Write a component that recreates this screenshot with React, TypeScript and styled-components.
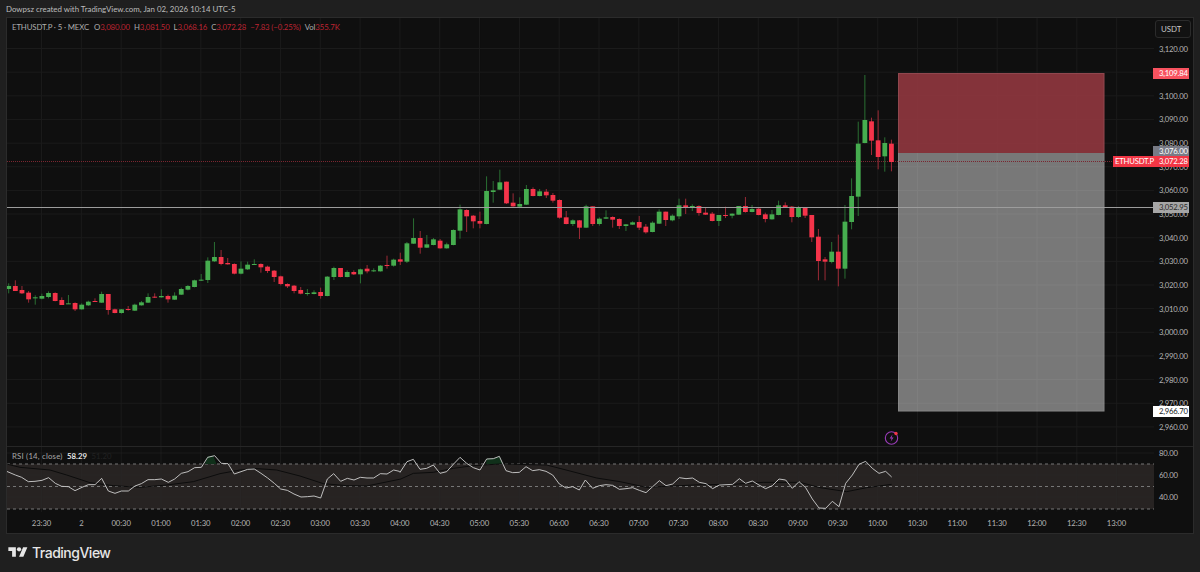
import * as React from 'react';
import styled, { createGlobalStyle } from 'styled-components';

type Bar = [number, number, number, number, 'u' | 'd'];

const FONT = `'Lato', 'Noto Sans', sans-serif`;
const BAR_STEP = 6.637;
const barX = (i: number) => 8.7 + BAR_STEP * i;
const priceY = (p: number) => 48.5 + (3120 - p) * 2.365;

// wick top, body top, body bottom, wick bottom - read off the chart at 3x, see toPage
const barsA: Bar[] = [
    [190, 198, 207, 220, 'u'], [181, 198, 213, 213, 'd'], [198, 210, 220, 222, 'd'], [213, 218, 238, 248, 'd'],
    [226, 232, 234, 254, 'u'], [221, 228, 236, 238, 'u'], [214, 219, 231, 235, 'u'], [217, 219, 243, 244, 'd'],
    [232, 240, 255, 255, 'd'], [225, 250, 252, 252, 'u'], [247, 249, 268, 273, 'd'], [250, 254, 268, 269, 'u'],
    [242, 245, 256, 258, 'u'], [235, 243, 246, 246, 'd'], [215, 222, 248, 249, 'u'], [222, 222, 270, 284, 'd'],
    [266, 268, 279, 280, 'd'], [267, 268, 279, 281, 'u'], [258, 267, 270, 272, 'd'], [251, 254, 272, 273, 'u'],
    [243, 247, 256, 257, 'u'], [220, 231, 248, 249, 'u'], [220, 230, 233, 234, 'd'], [208, 228, 232, 233, 'u'],
    [224, 228, 238, 248, 'd'], [217, 227, 239, 240, 'u'], [203, 207, 224, 225, 'u'], [195, 198, 209, 211, 'u'],
    [179, 181, 201, 202, 'u'], [162, 179, 182, 183, 'u'], [112, 122, 180, 189, 'u'], [66, 111, 124, 126, 'u'],
    [90, 111, 132, 136, 'd'], [114, 129, 133, 134, 'd'], [130, 132, 161, 163, 'd'], [124, 146, 161, 163, 'u'],
    [125, 134, 148, 150, 'u'], [118, 132, 134, 135, 'u'], [130, 132, 142, 158, 'd'], [137, 140, 153, 159, 'd'],
    [150, 152, 171, 186, 'd'], [167, 169, 192, 196, 'd'], [190, 192, 199, 204, 'd'], [195, 197, 213, 220, 'd'],
    [201, 210, 221, 223, 'd'], [207, 219, 222, 227, 'u'], [211, 217, 222, 223, 'u'], [203, 216, 228, 236, 'd'],
    [168, 170, 228, 229, 'u'], [140, 144, 171, 180, 'u'], [144, 144, 171, 172, 'd'], [151, 156, 171, 172, 'u'],
    [151, 156, 163, 165, 'd'], [146, 148, 163, 190, 'u'], [135, 146, 154, 160, 'd'], [145, 151, 154, 156, 'u'],
    [135, 137, 154, 155, 'u'], [107, 135, 137, 146, 'd'], [116, 119, 137, 140, 'u'],
];
const barsB: Bar[] = [
    [278, 298, 305, 315, 'd'], [246, 250, 305, 309, 'u'], [175, 234, 251, 252, 'u'], [213, 234, 263, 281, 'd'],
    [225, 253, 263, 264, 'u'], [234, 238, 255, 256, 'u'], [237, 242, 265, 266, 'd'], [248, 253, 265, 266, 'u'],
    [208, 210, 255, 256, 'u'], [134, 148, 212, 236, 'u'], [148, 150, 169, 216, 'd'], [165, 167, 184, 205, 'd'],
    [155, 183, 191, 205, 'd'], [49, 93, 192, 193, 'u'], [63, 91, 96, 128, 'u'], [29, 67, 89, 90, 'u'],
    [65, 65, 130, 132, 'd'], [100, 128, 139, 140, 'd'], [112, 132, 140, 141, 'u'], [75, 87, 134, 135, 'u'],
    [82, 87, 108, 109, 'd'], [87, 94, 108, 109, 'u'], [87, 95, 106, 114, 'd'], [99, 105, 122, 128, 'd'],
    [118, 120, 173, 176, 'd'], [153, 172, 192, 193, 'd'], [178, 181, 192, 198, 'u'], [180, 181, 203, 237, 'd'],
    [134, 139, 203, 204, 'u'], [139, 139, 192, 198, 'd'], [172, 176, 192, 197, 'u'], [151, 172, 176, 177, 'u'],
    [169, 171, 179, 203, 'd'], [175, 177, 198, 207, 'd'], [192, 193, 198, 213, 'u'], [184, 187, 194, 195, 'u'],
    [168, 186, 203, 210, 'd'], [192, 200, 217, 221, 'd'], [184, 188, 216, 217, 'u'], [148, 155, 191, 192, 'u'],
    [155, 155, 180, 198, 'd'], [163, 167, 181, 184, 'u'], [116, 136, 169, 177, 'u'], [116, 136, 142, 162, 'd'],
    [133, 138, 144, 153, 'u'], [136, 138, 159, 167, 'd'], [143, 158, 164, 165, 'd'], [156, 161, 183, 184, 'd'],
    [165, 165, 183, 198, 'u'], [140, 165, 168, 174, 'd'], [160, 161, 167, 175, 'u'], [138, 138, 164, 165, 'u'],
    [111, 138, 156, 158, 'd'], [135, 147, 156, 157, 'u'], [143, 146, 165, 166, 'd'], [158, 163, 177, 187, 'd'],
    [150, 163, 178, 179, 'u'], [122, 136, 165, 166, 'u'], [127, 136, 142, 143, 'd'], [138, 140, 171, 187, 'd'],
    [138, 142, 171, 174, 'u'], [142, 143, 167, 174, 'd'], [165, 165, 232, 246, 'd'], [207, 230, 303, 361, 'd'],
    [291, 298, 305, 361, 'd'], [246, 275, 306, 310, 'u'], [224, 275, 326, 379, 'd'],
];
const barsC: Bar[] = [
    [405, 455, 596, 626, 'u'], [325, 378, 456, 478, 'u'], [155, 221, 380, 438, 'u'], [15, 150, 219, 220, 'u'],
    [143, 154, 212, 255, 'd'], [121, 211, 261, 298, 'd'], [202, 219, 259, 305, 'u'], [209, 221, 276, 304, 'd'],
];

const toPage = (rows: Bar[], y0: number): Bar[] =>
    rows.map(([a, b, c, d, dir]) => [y0 + a / 3, y0 + b / 3, y0 + c / 3, y0 + d / 3, dir]);
const bars: Bar[] = [...toPage(barsA, 220), ...toPage(barsB, 160), ...toPage(barsC, 70)];

const rsiA = [20, 94, 46, 105, 65, 112, 85, 125, 105, 124, 126, 121, 146, 113, 166, 130, 185, 139, 205, 140, 225, 152, 246, 142, 265, 134, 285, 134, 305, 115, 325, 153, 345, 160, 364, 153, 385, 153, 405, 138, 424, 131, 444, 119, 464, 119, 484, 117, 505, 127, 524, 117, 544, 100, 564, 95, 584, 83, 604, 82, 623, 52, 644, 47, 664, 70, 684, 71, 703, 102, 723, 95, 743, 88, 763, 87, 783, 100, 803, 114, 823, 130, 842, 147, 862, 151, 882, 162, 903, 171, 922, 170, 942, 168, 962, 174, 982, 117, 1001, 101, 1022, 124, 1042, 115, 1062, 120, 1081, 112, 1101, 114, 1121, 114, 1141, 101, 1161, 102, 1181, 90, 1198, 94];
const rsiB = [0, 97, 21, 65, 40, 58, 60, 88, 80, 85, 100, 75, 120, 100, 140, 95, 160, 73, 180, 52, 200, 70, 220, 83, 240, 90, 260, 57, 280, 56, 298, 49, 318, 92, 338, 98, 358, 97, 378, 80, 398, 92, 418, 89, 438, 94, 458, 105, 478, 132, 498, 144, 518, 140, 538, 150, 556, 120, 578, 145, 598, 137, 618, 134, 638, 136, 658, 148, 678, 146, 698, 143, 718, 151, 738, 158, 758, 140, 778, 122, 798, 137, 818, 132, 838, 113, 858, 116, 878, 114, 898, 127, 918, 131, 938, 146, 958, 135, 978, 134, 998, 133, 1018, 116, 1037, 130, 1057, 123, 1077, 135, 1097, 146, 1117, 137, 1137, 117, 1157, 120, 1177, 145, 1197, 125, 1217, 143, 1237, 177, 1257, 204, 1277, 205, 1297, 184, 1317, 200, 1337, 130, 1357, 105, 1377, 73, 1397, 64, 1417, 85, 1437, 100, 1457, 94, 1475, 111];
const maA = [20, 72, 60, 82, 150, 90, 200, 105, 270, 128, 340, 137, 420, 142, 500, 135, 580, 125, 660, 101, 720, 90, 760, 85, 830, 90, 900, 108, 970, 131, 1040, 137, 1100, 138, 1198, 118];
const maB = [0, 118, 40, 100, 100, 97, 160, 85, 220, 77, 300, 72, 440, 75, 510, 93, 590, 114, 660, 125, 740, 142, 820, 138, 900, 134, 1000, 133, 1090, 127, 1200, 127, 1260, 143, 1340, 155, 1400, 143, 1475, 133];

const linePoints = (left: number[], right: number[]) => {
    const out: string[] = [];
    for (let i = 0; i < left.length; i += 2) out.push(`${left[i] / 3},${440 + left[i + 1] / 3}`);
    for (let i = 0; i < right.length; i += 2) out.push(`${400 + right[i] / 3},${440 + right[i + 1] / 3}`);
    return out.join(' ');
};

const gridXs = Array.from({ length: 29 }, (_, i) => 1.7 + 39.82 * i);
const ticks = [3120, 3110, 3100, 3090, 3080, 3070, 3060, 3050, 3040, 3030, 3020, 3010, 3000, 2990, 2980, 2970, 2960];
const times = ['23:30', '2', '00:30', '01:00', '01:30', '02:00', '02:30', '03:00', '03:30', '04:00', '04:30', '05:00', '05:30', '06:00', '06:30', '07:00', '07:30', '08:00', '08:30', '09:00', '09:30', '10:00', '10:30', '11:00', '11:30', '12:00', '12:30', '13:00'];

const GlobalStyle = createGlobalStyle`
    html, body {
        margin: 0;
        padding: 0;
        background: #1f1f1f;
    }
`;

const Page = styled.div`
    width: 1200px;
    height: 572px;
    display: flex;
    flex-direction: column;
    overflow: hidden;
    background: #1f1f1f;
    font-family: ${FONT};
`;
const Caption = styled.div`
    height: 17px;
    line-height: 19px;
    padding-left: 6px;
    font-size: 7.9px;
    color: #bcbcbc;
    white-space: nowrap;
`;
const Frame = styled.div`
    width: 1186px;
    margin-left: 6px;
    border: 1px solid #2b2b2b;
    background: #0f0f0f;
    display: grid;
    grid-template-columns: 1147px 39px;
    grid-template-rows: 428px 1px 65px 21px;
`;
const Plot = styled.div`
    position: relative;
`;
const PaneSvg = styled.svg`
    display: block;
    width: 100%;
    height: 100%;
`;
const Legend = styled.div`
    position: absolute;
    left: 5px;
    top: 4px;
    display: flex;
    font-size: 7.8px;
    line-height: 11px;
    letter-spacing: -0.12px;
    color: #adadad;
    white-space: nowrap;
`;
const LegendSymbol = styled.span`
    margin-right: 1px;
`;
const LegendField = styled.span`
    margin-left: 4px;
`;
const LegendValue = styled.span`
    color: #bd2432;
`;
const PriceScale = styled.div`
    position: relative;
    font-size: 7.7px;
    letter-spacing: -0.2px;
`;
const UnitButton = styled.div`
    position: absolute;
    top: 2px;
    left: 1px;
    width: 36px;
    height: 18px;
    border: 1px solid #2b2b2b;
    border-radius: 3px;
    background: #121212;
    color: #c8c8c8;
    font-size: 7.9px;
    letter-spacing: 0;
    line-height: 16px;
    padding-left: 5px;
    box-sizing: border-box;
`;
const Tick = styled.div`
    position: absolute;
    left: 5px;
    height: 12px;
    margin-top: -6px;
    line-height: 12px;
    color: #b4b4b4;
`;
const PriceTag = styled.div<{ $bg: string; $fg: string }>`
    position: absolute;
    left: -1px;
    width: 36px;
    height: 11px;
    margin-top: -5.5px;
    box-sizing: border-box;
    padding-left: 6px;
    line-height: 11px;
    background: ${p => p.$bg};
    color: ${p => p.$fg};
    white-space: nowrap;
`;
const SymbolTag = styled(PriceTag)`
    left: -41px;
    width: 40px;
    padding-left: 2px;
`;
const PaneRule = styled.div`
    grid-column: 1 / 3;
    background: #262626;
`;
const RsiLegend = styled.div`
    position: absolute;
    left: 5px;
    top: 3px;
    display: flex;
    gap: 4.5px;
    font-size: 7.8px;
    line-height: 12px;
    color: #a8a8a8;
`;
const RsiTitle = styled.span`
    letter-spacing: 0.2px;
`;
const RsiValue = styled.span`
    color: #e4e4e4;
    font-weight: 700;
`;
const RsiMa = styled.span`
    color: #222222;
`;
const TimeAxis = styled.div`
    grid-column: 1 / 3;
    display: flex;
    padding-left: 14.6px;
    font-size: 7.7px;
    letter-spacing: -0.1px;
    line-height: 22px;
    color: #b4b4b4;
`;
const TimeLabel = styled.div`
    width: 39.82px;
    text-align: center;
    flex: none;
`;
const Footer = styled.div`
    flex: 1;
    display: flex;
    align-items: center;
    gap: 4px;
    padding: 0 0 2px 8px;
`;
const Wordmark = styled.span`
    font-family: 'Inter', 'Noto Sans', sans-serif;
    font-size: 14px;
    font-weight: 500;
    color: #e6e6e6;
    letter-spacing: -0.5px;
`;

const Candles = () => (
    <g>
        {bars.map(([wt, bt, bb, wb, dir], i) => {
            const x = barX(i);
            const up = dir === 'u';
            return (
                <g key={i}>
                    <line x1={x} x2={x} y1={wt} y2={wb} stroke={up ? '#2a6f33' : '#9c2a36'} strokeWidth={1} />
                    <rect x={x - 2.4} y={bt} width={4.8} height={Math.max(bb - bt, 1)} fill={up ? '#46ad4f' : '#f5344a'} />
                </g>
            );
        })}
    </g>
);

const BoltIcon = () => (
    <g>
        <circle cx={891.5} cy={438} r={6.2} fill="none" stroke="#9a3cb8" strokeWidth={1.1} />
        <path d="M892.6 434.3l-3 4.2h2l-1 3.2 3-4.3h-2z" fill="#9a3cb8" />
        <circle cx={896} cy={433.5} r={1.7} fill="#f23645" />
    </g>
);

const MainPane = () => (
    <Plot>
        <PaneSvg viewBox="7 18 1147 428">
            {gridXs.map(x => (
                <line key={x} x1={x} x2={x} y1={18} y2={446} stroke="#1b1b1b" />
            ))}
            {ticks.map(t => (
                <line key={t} x1={7} x2={1154} y1={priceY(t)} y2={priceY(t)} stroke="#1b1b1b" />
            ))}
            <rect x={898} y={73} width={206.5} height={80} fill="rgba(153, 58, 66, 0.85)" />
            <rect x={898} y={153} width={206.5} height={258.5} fill="rgba(255, 255, 255, 0.44)" />
            <rect x={898.5} y={73.5} width={205.5} height={337.5} fill="none" stroke="rgba(255,255,255,0.1)" />
            <line x1={7} x2={1113} y1={161.5} y2={161.5} stroke="#7a2630" strokeDasharray="1 1" />
            <Candles />
            <line x1={7} x2={1154} y1={207.5} y2={207.5} stroke="#9c9c9c" />
            <BoltIcon />
        </PaneSvg>
        <Legend>
            <LegendSymbol>ETHUSDT.P · 5 · MEXC</LegendSymbol>
            <LegendField>O<LegendValue>3,080.00</LegendValue></LegendField>
            <LegendField>H<LegendValue>3,081.50</LegendValue></LegendField>
            <LegendField>L<LegendValue>3,068.16</LegendValue></LegendField>
            <LegendField>C<LegendValue>3,072.28</LegendValue></LegendField>
            <LegendField><LegendValue>−7.83 (−0.25%)</LegendValue></LegendField>
            <LegendField>Vol<LegendValue>355.7K</LegendValue></LegendField>
        </Legend>
    </Plot>
);

const MainScale = () => (
    <PriceScale>
        <UnitButton>USDT</UnitButton>
        {ticks.filter(t => t !== 3110).map(t => (
            <Tick key={t} style={{ top: priceY(t) - 18 }}>
                {t.toLocaleString('en-US')}.00
            </Tick>
        ))}
        <PriceTag $bg="#f7525f" $fg="#ffffff" style={{ top: 73.5 - 18 }}>3,109.84</PriceTag>
        <PriceTag $bg="#787b86" $fg="#ffffff" style={{ top: 151.5 - 18 }}>3,076.00</PriceTag>
        <PriceTag $bg="#f23645" $fg="#ffffff" style={{ top: 161.5 - 18 }}>3,072.28</PriceTag>
        <SymbolTag $bg="#f23645" $fg="#ffffff" style={{ top: 161.5 - 18 }}>ETHUSDT.P</SymbolTag>
        <PriceTag $bg="#a6a6a6" $fg="#2a2a2a" style={{ top: 207.5 - 18 }}>3,052.95</PriceTag>
        <PriceTag $bg="#ffffff" $fg="#131722" style={{ top: 411.5 - 18 }}>2,966.70</PriceTag>
    </PriceScale>
);

const RsiPane = () => (
    <Plot>
        <PaneSvg viewBox="7 447 1147 65">
            <rect x={7} y={464} width={1147} height={45} fill="#272322" />
            {gridXs.map(x => (
                <line key={x} x1={x} x2={x} y1={447} y2={512} stroke="#2a2a2a" strokeOpacity={0.4} />
            ))}
            {[453, 475, 497].map(y => (
                <line key={y} x1={7} x2={1154} y1={y} y2={y} stroke="#2a2a2a" strokeOpacity={0.4} />
            ))}
            {[464, 486.5, 509].map(y => (
                <line key={y} x1={7} x2={1154} y1={y} y2={y} stroke="#767676" strokeDasharray="3 3" />
            ))}
            <polygon points="205,464 207.5,456.5 213,455.5 216.5,464" fill="#10301a" />
            <polygon points="486,464 487,458.5 493,458.5 499.5,456.5 503,464" fill="#10301a" />
            <polyline points={linePoints(maA, maB)} fill="none" stroke="#0c0c0c" strokeWidth={1} />
            <polyline points={linePoints(rsiA, rsiB)} fill="none" stroke="#cfcfcf" strokeWidth={0.9} />
        </PaneSvg>
        <RsiLegend>
            <RsiTitle>RSI (14, close)</RsiTitle>
            <RsiValue>58.29</RsiValue>
            <RsiMa>51.20</RsiMa>
        </RsiLegend>
    </Plot>
);

const RsiScale = () => (
    <PriceScale>
        {[[80, 453], [60, 475], [40, 497]].map(([v, y]) => (
            <Tick key={v} style={{ top: y - 447 }}>{v}.00</Tick>
        ))}
    </PriceScale>
);

const Logo = () => (
    <svg width="20" height="15" viewBox="0 0 36 28" aria-hidden="true">
        <path d="M14 22H7V11H0V4h14v18zM28 22h-8l7.5-18h8L28 22z" fill="#e6e6e6" />
        <circle cx="20" cy="8" r="4" fill="#e6e6e6" />
    </svg>
);

export default function App() {
    return (
        <Page>
            <GlobalStyle />
            <Caption>Dowpsz created with TradingView.com, Jan 02, 2026 10:14 UTC-5</Caption>
            <Frame>
                <MainPane />
                <MainScale />
                <PaneRule />
                <RsiPane />
                <RsiScale />
                <TimeAxis>
                    {times.map(t => (
                        <TimeLabel key={t}>{t}</TimeLabel>
                    ))}
                </TimeAxis>
            </Frame>
            <Footer>
                <Logo />
                <Wordmark>TradingView</Wordmark>
            </Footer>
        </Page>
    );
}
